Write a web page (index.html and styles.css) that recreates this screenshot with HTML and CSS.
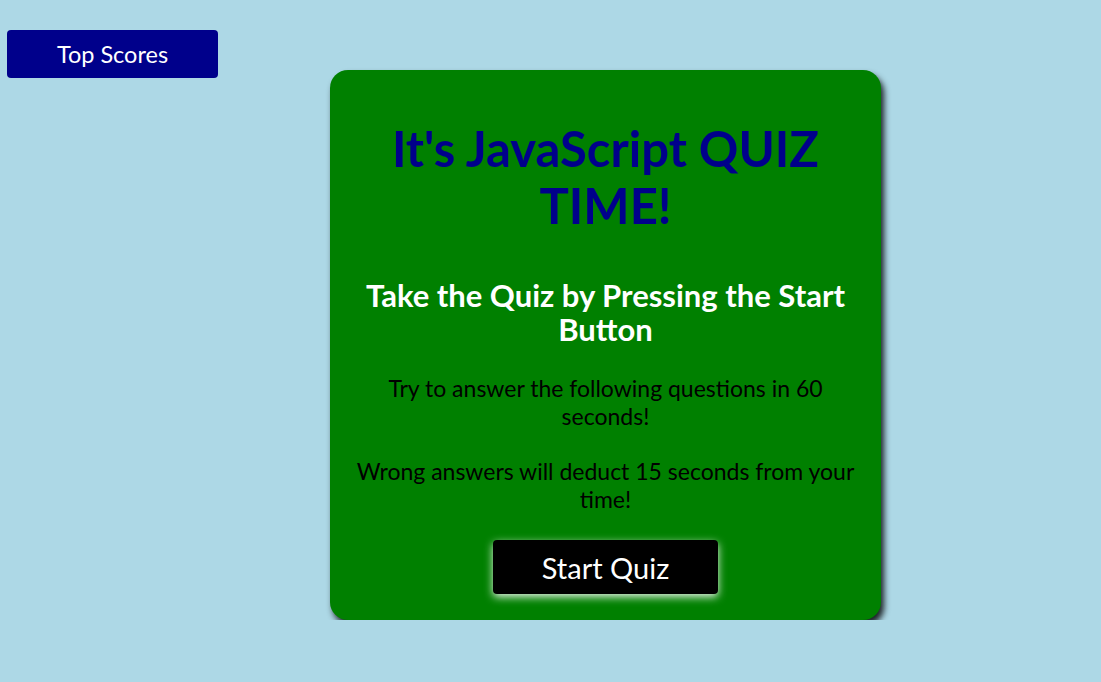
FILE: index.html
```html
<!DOCTYPE html>
<html lang="en">
<head>
<meta charset="utf-8">
<title>JavaScript Quiz</title>
<link rel="stylesheet" href="styles.css">
</head>
<body>
<div class="page">
  <button class="top-scores">Top Scores</button>
  <main class="card">
    <h1 class="title">It's JavaScript QUIZ TIME!</h1>
    <h2 class="subtitle">Take the Quiz by Pressing the Start Button</h2>
    <p class="info">Try to answer the following questions in 60 seconds!</p>
    <p class="info">Wrong answers will deduct 15 seconds from your time!</p>
    <button class="start">Start Quiz</button>
  </main>
</div>
</body>
</html>
```
FILE: styles.css
```css
html, body {
  margin: 0;
  padding: 0;
  background: #add8e6;
  font-family: Lato, "Open Sans", sans-serif;
}
.page {
  display: flex;
  align-items: flex-start;
  padding-top: 30px;
}
.top-scores {
  margin-left: 7px;
  width: 211px;
  height: 48px;
  background: #00008b;
  color: #fff;
  border: none;
  border-radius: 4px;
  font-family: Lato, sans-serif;
  font-size: 23.5px;
  padding: 0;
}
.card {
  margin-left: 112px;
  margin-top: 40px;
  width: 551px;
  box-sizing: border-box;
  background: #008000;
  border-radius: 18px;
  box-shadow: 3px 5px 6px rgba(0,0,0,0.85);
  padding: 50px 20px 26px;
  display: flex;
  flex-direction: column;
  align-items: center;
  text-align: center;
}
.title {
  margin: 0;
  color: #00008b;
  font-size: 49px;
  line-height: 57px;
  font-weight: 700;
}
.subtitle {
  margin: 44px 0 0;
  color: #fff;
  font-size: 31px;
  line-height: 34px;
  font-weight: 700;
}
.info {
  margin: 28px 0 0;
  color: #000;
  font-size: 23px;
  line-height: 28px;
}
.info + .info {
  margin-top: 27px;
}
.start {
  margin-top: 27px;
  width: 225px;
  height: 54px;
  background: #000;
  color: #fff;
  border: none;
  border-radius: 4px;
  font-family: Lato, sans-serif;
  font-size: 29px;
  padding: 0;
  box-shadow: 0 3px 8px rgba(255,255,255,0.9);
}
```
